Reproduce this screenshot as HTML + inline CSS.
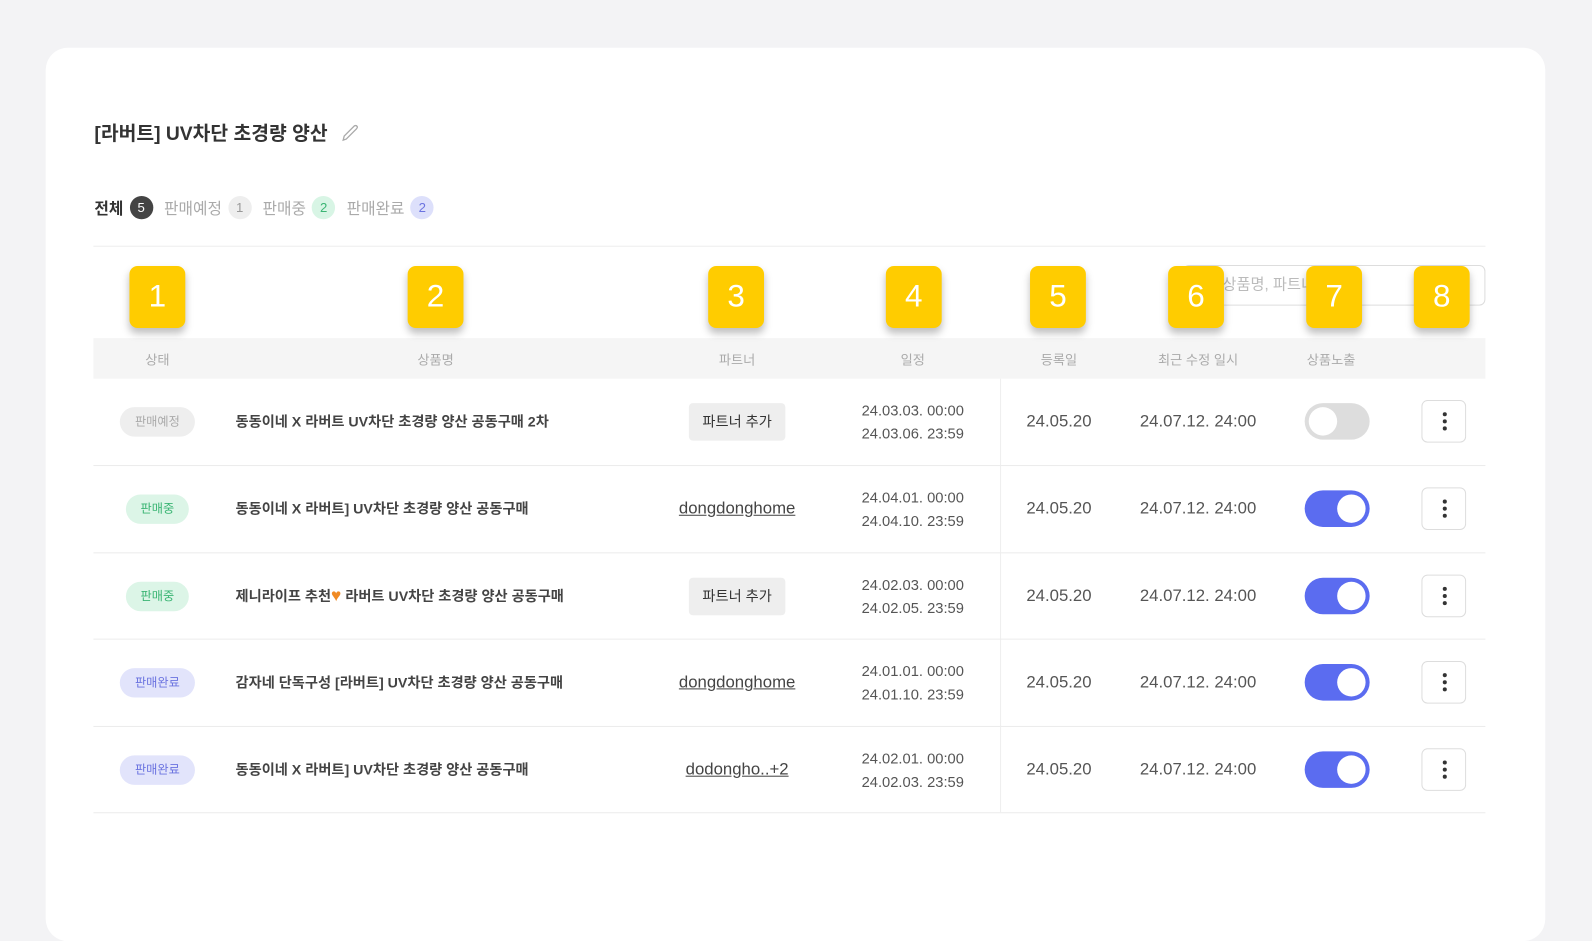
<!DOCTYPE html>
<html><head><meta charset="utf-8"><style>
*{margin:0;padding:0;box-sizing:border-box}
body{width:1592px;height:908px;background:#f3f3f5;font-family:"Liberation Sans","Noto Sans CJK KR",sans-serif;color:#333;position:relative;overflow:hidden}
#w{position:absolute;left:0;top:0;width:1568px;height:894px;transform:scale(1.01531);transform-origin:0 0}
.card{position:absolute;left:45px;top:47px;width:1477px;height:880px;background:#fff;border-radius:22px}
.a{position:absolute}
.c{position:absolute;transform:translateX(-50%);white-space:nowrap;text-align:center}
.title{left:93px;top:117px;font-size:19px;font-weight:bold;color:#333}
.tabs{left:93px;top:193px;font-size:15.5px;display:flex;align-items:center;gap:6px}
.tabs b{color:#333}
.tabs span.t{color:#aaa;margin-left:5px}
.cnt{display:inline-block;width:23px;height:23px;border-radius:12px;text-align:center;line-height:23px;font-size:13px}
.hr{position:absolute;left:92px;width:1371px;height:1px;background:#ececec}
.head{position:absolute;left:92px;top:333px;width:1371px;height:40px;background:#f5f5f5}
.hd{top:344px;font-size:13px;color:#aaa}
.badge{position:absolute;width:55px;height:61px;top:262px;border-radius:8px;background:#ffcc00;color:#fff;font-size:31px;text-align:center;line-height:60px;box-shadow:0 5px 8px rgba(0,0,0,.25);transform:translateX(-50%)}
.st{width:74px;height:29px;border-radius:15px;font-size:12px;line-height:29px;text-align:center}
.name{font-size:14px;font-weight:bold;color:#444}
.pbtn{width:95px;height:37px;background:#eee;border-radius:4px;font-size:14px;line-height:37px}
.link{font-size:16.5px;text-decoration:underline;color:#444}
.date{font-size:14.5px;line-height:23px;color:#555}
.num{font-size:16.5px;color:#555}
.tog{width:64px;height:36px;border-radius:18px;position:absolute;transform:translateX(-50%)}
.tog i{position:absolute;top:4px;width:28px;height:28px;border-radius:14px;background:#fff}
.more{width:44px;height:42px;border:1px solid #ddd;border-radius:6px;background:#fff}
.more i{position:absolute;left:20px;width:4px;height:4px;border-radius:2px;background:#333}
.heart{color:#f08a24;font-size:17px;line-height:14px}
</style></head><body><div id="w">
<div class="card"></div>
<div class="a title">[라버트] UV차단 초경량 양산 <svg width="22" height="22" viewBox="0 0 22 22" style="vertical-align:-4px;margin-left:6px"><path d="M4 18 L5 14 L15 4 Q17 3 18 5 Q18 6 17 7 L7 17 Z" fill="none" stroke="#aaa" stroke-width="1.3"/></svg></div>
<div class="a tabs"><b>전체</b><span class="cnt" style="background:#444;color:#fff">5</span><span class="t">판매예정</span><span class="cnt" style="background:#eee;color:#999">1</span><span class="t">판매중</span><span class="cnt" style="background:#d8f5e5;color:#3bb574">2</span><span class="t">판매완료</span><span class="cnt" style="background:#dde0fb;color:#6b73e0">2</span></div>
<div class="hr" style="top:242px"></div>
<div class="a" style="left:1165px;top:261px;width:298px;height:40px;border:1px solid #ddd;border-radius:6px;font-size:15px;color:#bbb;line-height:38px;padding-left:38px">상품명, 파트너</div>
<div class="head"></div>
<div class="c hd" style="left:155px">상태</div>
<div class="c hd" style="left:429px">상품명</div>
<div class="c hd" style="left:726px">파트너</div>
<div class="c hd" style="left:899px">일정</div>
<div class="c hd" style="left:1043px">등록일</div>
<div class="c hd" style="left:1180px">최근 수정 일시</div>
<div class="c hd" style="left:1311px">상품노출</div>
<div class="badge" style="left:155px">1</div>
<div class="badge" style="left:429px">2</div>
<div class="badge" style="left:725px">3</div>
<div class="badge" style="left:900px">4</div>
<div class="badge" style="left:1042px">5</div>
<div class="badge" style="left:1178px">6</div>
<div class="badge" style="left:1314px">7</div>
<div class="badge" style="left:1420px">8</div>
<div class="a" style="left:985px;top:373px;width:1px;height:427px;background:#eee"></div>
<div class="hr" style="top:458px"></div><div class="hr" style="top:544px"></div><div class="hr" style="top:629px"></div><div class="hr" style="top:715px"></div><div class="hr" style="top:800px"></div>

<div class="c st" style="left:155px;top:401px;background:#eee;color:#aaa">판매예정</div>
<div class="c st" style="left:155px;top:487px;background:#dcf5e7;color:#3bb574;width:62px">판매중</div>
<div class="c st" style="left:155px;top:573px;background:#dcf5e7;color:#3bb574;width:62px">판매중</div>
<div class="c st" style="left:155px;top:658px;background:#e2e4fb;color:#6b73e0">판매완료</div>
<div class="c st" style="left:155px;top:744px;background:#e2e4fb;color:#6b73e0">판매완료</div>

<div class="a name" style="left:232px;top:405px">동동이네 X 라버트 UV차단 초경량 양산 공동구매 2차</div>
<div class="a name" style="left:232px;top:491px">동동이네 X 라버트] UV차단 초경량 양산 공동구매</div>
<div class="a name" style="left:232px;top:577px">제니라이프 추천<span class="heart">♥</span> 라버트 UV차단 초경량 양산 공동구매</div>
<div class="a name" style="left:232px;top:662px">감자네 단독구성 [라버트] UV차단 초경량 양산 공동구매</div>
<div class="a name" style="left:232px;top:748px">동동이네 X 라버트] UV차단 초경량 양산 공동구매</div>

<div class="c pbtn" style="left:726px;top:397px">파트너 추가</div>
<div class="c link" style="left:726px;top:492px">dongdonghome</div>
<div class="c pbtn" style="left:726px;top:569px">파트너 추가</div>
<div class="c link" style="left:726px;top:663px">dongdonghome</div>
<div class="c link" style="left:726px;top:749px">dodongho..+2</div>

<div class="c date" style="left:899px;top:394px">24.03.03. 00:00<br>24.03.06. 23:59</div>
<div class="c date" style="left:899px;top:480px">24.04.01. 00:00<br>24.04.10. 23:59</div>
<div class="c date" style="left:899px;top:566px">24.02.03. 00:00<br>24.02.05. 23:59</div>
<div class="c date" style="left:899px;top:651px">24.01.01. 00:00<br>24.01.10. 23:59</div>
<div class="c date" style="left:899px;top:737px">24.02.01. 00:00<br>24.02.03. 23:59</div>

<div class="c num" style="left:1043px;top:406px">24.05.20</div>
<div class="c num" style="left:1043px;top:492px">24.05.20</div>
<div class="c num" style="left:1043px;top:578px">24.05.20</div>
<div class="c num" style="left:1043px;top:663px">24.05.20</div>
<div class="c num" style="left:1043px;top:749px">24.05.20</div>
<div class="c num" style="left:1180px;top:406px">24.07.12. 24:00</div>
<div class="c num" style="left:1180px;top:492px">24.07.12. 24:00</div>
<div class="c num" style="left:1180px;top:578px">24.07.12. 24:00</div>
<div class="c num" style="left:1180px;top:663px">24.07.12. 24:00</div>
<div class="c num" style="left:1180px;top:749px">24.07.12. 24:00</div>

<div class="tog" style="left:1317px;top:397px;background:#ddd"><i style="left:4px"></i></div>
<div class="tog" style="left:1317px;top:483px;background:#5b6cf0"><i style="right:4px"></i></div>
<div class="tog" style="left:1317px;top:569px;background:#5b6cf0"><i style="right:4px"></i></div>
<div class="tog" style="left:1317px;top:654px;background:#5b6cf0"><i style="right:4px"></i></div>
<div class="tog" style="left:1317px;top:740px;background:#5b6cf0"><i style="right:4px"></i></div>

<div class="c more" style="left:1422px;top:394px"><i style="top:11px"></i><i style="top:18px"></i><i style="top:25px"></i></div>
<div class="c more" style="left:1422px;top:480px"><i style="top:11px"></i><i style="top:18px"></i><i style="top:25px"></i></div>
<div class="c more" style="left:1422px;top:566px"><i style="top:11px"></i><i style="top:18px"></i><i style="top:25px"></i></div>
<div class="c more" style="left:1422px;top:651px"><i style="top:11px"></i><i style="top:18px"></i><i style="top:25px"></i></div>
<div class="c more" style="left:1422px;top:737px"><i style="top:11px"></i><i style="top:18px"></i><i style="top:25px"></i></div>
</div></body></html>
